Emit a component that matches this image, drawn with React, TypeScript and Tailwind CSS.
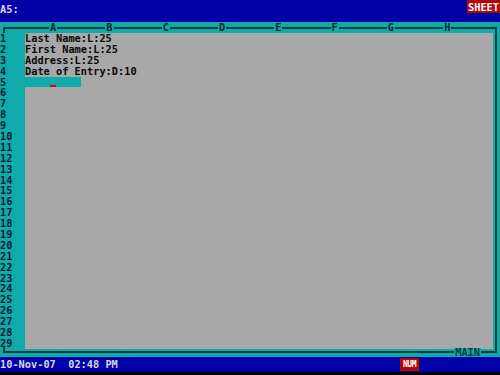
import React from "react";

const cols = ["A", "B", "C", "D", "E", "F", "G", "H"];
const rows = Array.from({ length: 29 }, (_, i) => i + 1);
const content: Record<number, string> = {
  1: "Last Name:L:25",
  2: "First Name:L:25",
  3: "Address:L:25",
  4: "Date of Entry:D:10",
};

export default function App() {
  return (
    <div
      className="w-[500px] h-[375px] bg-black flex flex-col overflow-hidden font-bold text-[10.3px] leading-none"
      style={{ fontFamily: '"DejaVu Sans Mono", "Liberation Mono", monospace' }}
    >
      {/* top status bar */}
      <div className="h-[22px] bg-[#0000a8] flex justify-between items-start">
        <div className="text-[#d8d8e8] pt-[4px]">
          <span className="inline-block scale-y-[1.1]">A5:</span>
        </div>
        <div className="bg-[#b00808] text-white h-[13px] w-[33px] flex items-center justify-center pt-[1px]">
          SHEET
        </div>
      </div>

      {/* spreadsheet area */}
      <div className="h-[335px] bg-[#10aaaa] pt-[5px] pl-[3px]">
        <div className="relative w-[494px] h-[326px] border-t-2 border-r-2 border-b-2 border-[#003c3c] flex flex-col">
          {/* left ticks */}
          <div className="absolute left-0 top-[-2px] w-[2px] h-[6px] bg-[#003c3c]" />
          <div className="absolute left-0 bottom-[-2px] w-[2px] h-[6px] bg-[#003c3c]" />
          {/* MAIN label */}
          <div className="absolute right-[14px] bottom-[-6px] bg-[#10aaaa] text-[#003c3c] px-[1px] h-[9px] leading-[9px]">
            MAIN
          </div>

          {/* column header */}
          <div className="-mt-[6px] h-[10px] flex">
            <div className="w-[22px] shrink-0" />
            {cols.map((c) => (
              <div key={c} className="w-[56.3px] shrink-0 flex justify-center">
                <span className="bg-[#10aaaa] text-[#002828] px-[1px] h-[9px] leading-[9px]">{c}</span>
              </div>
            ))}
          </div>

          {/* body */}
          <div className="flex -ml-[3px]">
            <div className="w-[25px] shrink-0 flex flex-col text-[#082030]">
              {rows.map((r) => (
                <div key={r} className="h-[10.9px] leading-[10.9px]">
                  {r}
                </div>
              ))}
            </div>
            <div className="w-[468px] bg-[#a8a8a8] flex flex-col text-[#080808]">
              {rows.map((r) => (
                <div key={r} className="h-[10.9px] leading-[10.9px] whitespace-pre">
                  {r === 5 ? (
                    <div className="w-[56px] h-[10.9px] bg-[#10aaaa] relative">
                      <div className="absolute left-[25px] top-[8px] w-[6px] h-[2px] bg-[#c01010]" />
                    </div>
                  ) : (
                    content[r] ?? ""
                  )}
                </div>
              ))}
            </div>
          </div>
        </div>
      </div>

      {/* bottom status bar */}
      <div className="h-[15px] bg-[#0000a8] flex items-center text-[#d8d8e8] whitespace-pre">
        <span className="w-[400px]">10-Nov-07  02:48 PM</span>
        <span className="bg-[#b00808] text-white h-[13px] w-[19px] flex items-center justify-center text-[8px] tracking-[-0.5px]">
          NUM
        </span>
      </div>
      <div className="flex-1 bg-black" />
    </div>
  );
}
